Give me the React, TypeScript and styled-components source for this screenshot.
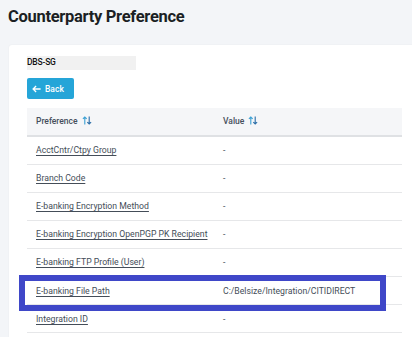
import styled, { createGlobalStyle } from 'styled-components';

const GlobalStyle = createGlobalStyle`
  html, body {
    margin: 0;
    padding: 0;
    background: #f3f5f8;
    overflow: hidden;
  }
  body {
    font-family: Roboto, "Liberation Sans", Arial, sans-serif;
  }
`;

interface PreferenceRow {
  name: string;
  value: string;
  highlighted?: boolean;
}

const rows: PreferenceRow[] = [
  { name: 'AcctCntr/Ctpy Group', value: '-' },
  { name: 'Branch Code', value: '-' },
  { name: 'E-banking Encryption Method', value: '-' },
  { name: 'E-banking Encryption OpenPGP PK Recipient', value: '-' },
  { name: 'E-banking FTP Profile (User)', value: '-' },
  { name: 'E-banking File Path', value: 'C:/Belsize/Integration/CITIDIRECT', highlighted: true },
  { name: 'Integration ID', value: '-' },
];

function SortIcon() {
  return (
    <SortSvg width="10" height="9" viewBox="0 0 10 9" aria-hidden>
      <path d="M2.8 8.5V1M0.9 2.9L2.8 1L4.7 2.9" stroke="#3aa0d4" strokeWidth="1.1" fill="none" />
      <path d="M7.2 0.5V8M5.3 6.1L7.2 8L9.1 6.1" stroke="#2b6ea8" strokeWidth="1.1" fill="none" />
    </SortSvg>
  );
}

function ArrowLeft() {
  return (
    <svg width="9" height="8" viewBox="0 0 9 8" aria-hidden>
      <path d="M8.6 4H1.1M4.1 1L1.1 4L4.1 7" stroke="#fff" strokeWidth="1.3" fill="none" />
    </svg>
  );
}

export default function App() {
  return (
    <>
      <GlobalStyle />
      <Page>
        <Title>Counterparty Preference</Title>
        <Card>
          <EntityLabel>DBS-SG</EntityLabel>
          <BackButton type="button">
            <ArrowLeft />
            Back
          </BackButton>
          <Table>
            <colgroup>
              <col style={{ width: 187 }} />
              <col />
            </colgroup>
            <thead>
              <tr>
                <th>
                  Preference <SortIcon />
                </th>
                <th>
                  Value <SortIcon />
                </th>
              </tr>
            </thead>
            <tbody>
              {rows.map((row) => (
                <Row key={row.name}>
                  <td>
                    <PrefLink href="#">{row.name}</PrefLink>
                  </td>
                  <td>
                    {row.value}
                    {row.highlighted && <Highlight />}
                  </td>
                </Row>
              ))}
            </tbody>
          </Table>
        </Card>
      </Page>
    </>
  );
}

const Page = styled.div`
  width: 412px;
  height: 337px;
  overflow: hidden;
`;

const Title = styled.h1`
  margin: 0;
  padding: 8px 0 0 8px;
  height: 45px;
  box-sizing: border-box;
  color: #1b1f24;
  font-size: 16.5px;
  font-weight: 700;
  line-height: 18px;
  letter-spacing: -0.3px;
`;

const Card = styled.div`
  position: relative;
  margin-left: 9px;
  width: 411px;
  padding: 11px 0 0 18px;
  box-sizing: border-box;
  background: #fff;
  border-radius: 3px;
  box-shadow: 0 0 2px rgba(0, 0, 0, 0.06);
  min-height: 300px;
`;

const EntityLabel = styled.div`
  width: 109px;
  height: 14px;
  background: #f1f1f1;
  color: #111;
  font-size: 8.5px;
  font-weight: 500;
  line-height: 12px;
  letter-spacing: -0.2px;
`;

const BackButton = styled.button`
  display: flex;
  align-items: center;
  gap: 4px;
  margin-top: 8px;
  width: 47px;
  height: 21px;
  padding: 0 0 0 5px;
  border: 0;
  border-radius: 2px;
  background: #25a5d8;
  color: #fff;
  font-family: inherit;
  font-size: 8.5px;
  font-weight: 500;
  cursor: pointer;
`;

const Table = styled.table`
  margin-top: 9px;
  width: 375px;
  border-collapse: collapse;
  table-layout: fixed;

  th,
  td {
    padding: 0 9px;
    text-align: left;
    white-space: nowrap;
    font-size: 8.7px;
    color: #444d58;
  }

  th {
    height: 26.5px;
    background: #f5f6f8;
    border-bottom: 2px solid #dfe1e4;
    font-size: 8.5px;
    font-weight: 500;
    color: #454f5c;
  }
`;

const SortSvg = styled.svg`
  margin-left: 2px;
  vertical-align: -1px;
`;

const Row = styled.tr`
  td {
    position: relative;
    height: 27.1px;
    border-bottom: 1px solid #e6e7e9;
  }
`;

const PrefLink = styled.a`
  color: #444d58;
  text-decoration: underline;
  text-underline-offset: 2px;
`;

const Highlight = styled.span`
  position: absolute;
  left: -195px;
  top: -2px;
  width: 367px;
  height: 36px;
  border: 6px solid #3f47c8;
  box-sizing: border-box;
  pointer-events: none;
`;
